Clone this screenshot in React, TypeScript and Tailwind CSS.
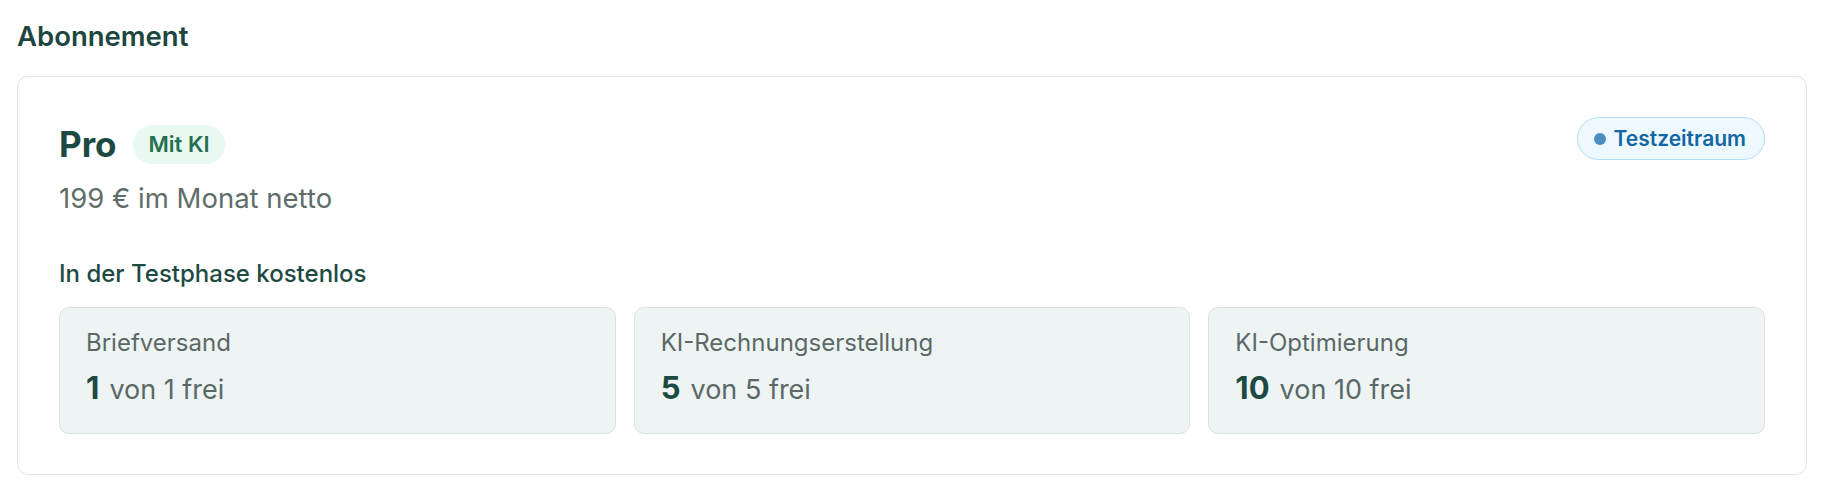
import React from 'react';

type Usage = { label: string; used: number; total: number };

const usages: Usage[] = [
  { label: 'Briefversand', used: 1, total: 1 },
  { label: 'KI-Rechnungserstellung', used: 5, total: 5 },
  { label: 'KI-Optimierung', used: 10, total: 10 },
];

function UsageCard({ usage }: { usage: Usage }) {
  return (
    <div className="rounded-[10px] border border-[#dbe3e2] bg-[#eef4f4] px-[26px] pt-[21px] pb-[25px]">
      <div className="text-[24px] leading-[28px] text-[#5a6966]">{usage.label}</div>
      <div className="mt-[13px] flex items-baseline gap-[10px] leading-[36px]">
        <span className="text-[31px] font-bold text-[#1c4a42]">{usage.used}</span>
        <span className="text-[27px] text-[#5a6966]">von {usage.total} frei</span>
      </div>
    </div>
  );
}

export default function App() {
  return (
    <div className="min-h-screen bg-white px-[17px] pt-5 pb-4 font-['Inter',sans-serif]">
      <h2 className="text-[27.5px] font-semibold leading-[32px] text-[#1e4640]">Abonnement</h2>

      <div className="mt-6 rounded-[11px] border border-[#e0e5e4] bg-white px-[41px] pt-10 pb-10">
        <div className="flex items-start justify-between">
          <div>
            <div className="mt-[5px] flex items-center">
              <span className="text-[35px] font-bold leading-[44px] text-[#1c4a42]">Pro</span>
              <span className="ml-4 flex h-[39px] items-center rounded-full bg-[#e9f8f1] px-4 text-[22px] font-semibold text-[#24704f]">
                Mit KI
              </span>
            </div>
            <div className="mt-4 text-[27.5px] leading-[32px] text-[#5f6d6a]">199 € im Monat netto</div>
          </div>

          <span className="flex h-[43px] items-center gap-2 rounded-full border border-[#b3dcf6] bg-[#eef8ff] pr-[18px] pl-4 text-[21px] font-semibold text-[#1166a3]">
            <span className="h-[12px] w-[12px] rounded-full bg-[#4a8ec2]" />
            Testzeitraum
          </span>
        </div>

        <div className="mt-[46px] text-[24px] font-medium leading-[28px] text-[#1e4a44]">
          In der Testphase kostenlos
        </div>

        <div className="mt-[19px] grid grid-cols-3 gap-[18px]">
          {usages.map(u => (
            <UsageCard key={u.label} usage={u} />
          ))}
        </div>
      </div>
    </div>
  );
}
